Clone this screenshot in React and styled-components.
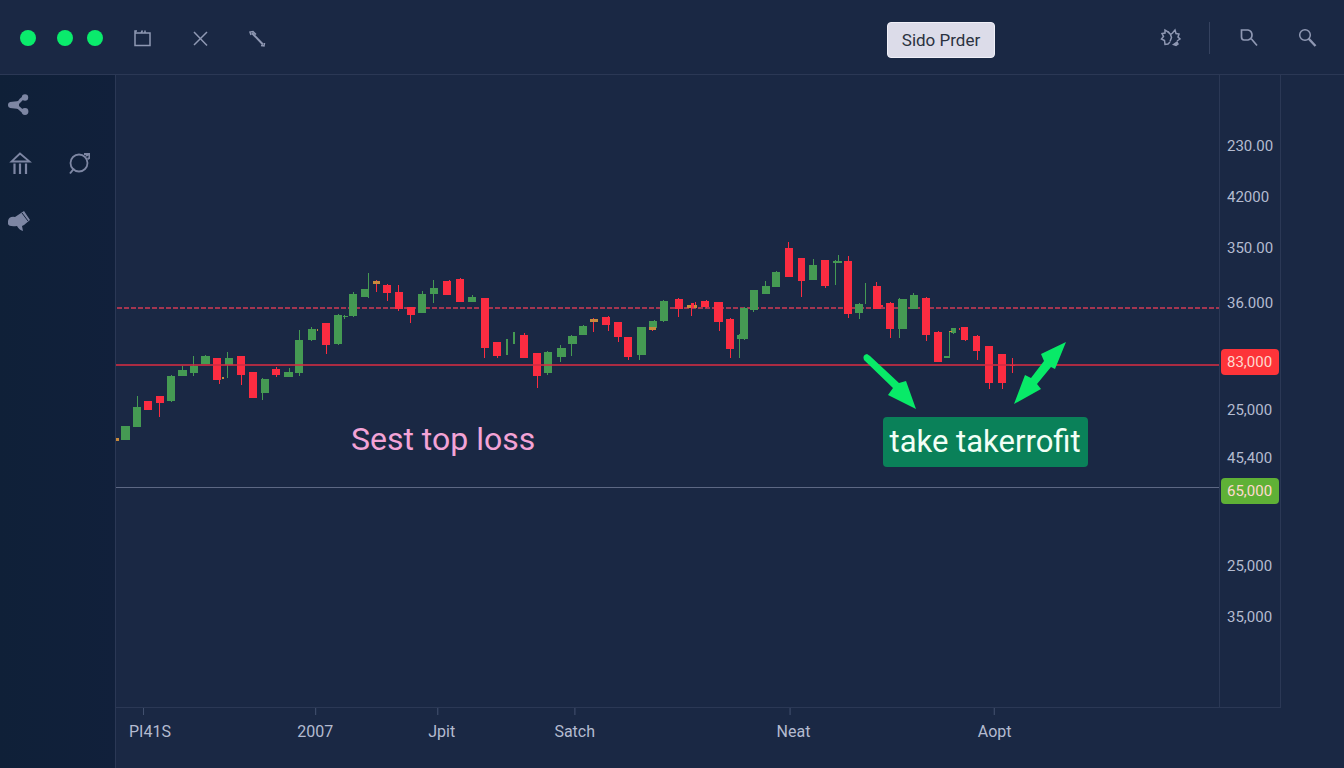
import React, {useState} from "react";
import styled, {createGlobalStyle} from "styled-components";

const UP = "#459a53";
const DOWN = "#fb2c41";
const MIXED = "#c98a3c";

// [color, left, top, bottom, wick top, wick bottom, wick x, width]
const candles = [
    ["mixed", 116, 438, 441, 438, 441, 117, 3],
    ["up", 121, 426, 440, 426, 440, 126, 9],
    ["up", 133, 407, 427, 396, 427, 137],
    ["down", 144, 401, 410, 401, 410, 148],
    ["down", 156, 396, 403, 396, 417, 159],
    ["up", 167, 376, 401, 375, 402, 171],
    ["up", 178, 370, 376, 366, 376, 182, 9],
    ["up", 190, 366, 373, 356, 376, 193],
    ["up", 201, 356, 364, 355, 364, 205, 9],
    ["down", 213, 358, 380, 358, 384, 219],
    ["mixed", 222, 377, 379, 377, 379, 223, 2],
    ["up", 225, 358, 365, 352, 378, 227],
    ["down", 237, 356, 375, 356, 385, 241],
    ["down", 249, 372, 398, 372, 398, 253],
    ["up", 261, 379, 393, 378, 400, 262],
    ["down", 272, 369, 375, 367, 377, 276],
    ["up", 284, 372, 377, 368, 377, 289, 9],
    ["up", 295, 340, 373, 330, 376, 299],
    ["up", 308, 329, 340, 327, 341, 311],
    ["mixed", 317, 329, 331, 329, 331, 317, 1],
    ["down", 322, 323, 345, 323, 354, 326],
    ["up", 334, 315, 344, 314, 345, 338],
    ["up", 343, 316, 317, 315, 319, 344, 5],
    ["up", 349, 294, 316, 292, 317, 353],
    ["up", 361, 289, 297, 273, 298, 368],
    ["mixed", 373, 281, 284, 280, 292, 376, 7],
    ["down", 383, 285, 293, 284, 301, 387],
    ["down", 395, 292, 309, 285, 311, 398],
    ["down", 407, 307, 315, 307, 323, 410],
    ["up", 418, 294, 313, 291, 313, 422],
    ["up", 430, 288, 294, 280, 303, 433],
    ["down", 443, 281, 295, 280, 295, 449],
    ["down", 456, 279, 302, 278, 302, 460],
    ["up", 468, 297, 302, 295, 302, 472],
    ["down", 481, 298, 348, 298, 358, 484],
    ["down", 493, 342, 356, 342, 358, 497],
    ["up", 506, 339, 355, 339, 355, 507, 2],
    ["up", 513, 332, 344, 332, 344, 513, 2],
    ["down", 520, 335, 358, 333, 358, 524],
    ["down", 533, 353, 376, 353, 388, 537],
    ["up", 544, 352, 373, 351, 375, 547],
    ["up", 557, 348, 357, 345, 362, 560, 9],
    ["up", 568, 336, 344, 335, 356, 571, 9],
    ["up", 579, 326, 335, 325, 335, 583],
    ["mixed", 590, 319, 322, 318, 332, 593],
    ["down", 602, 317, 325, 316, 331, 608],
    ["down", 614, 322, 337, 322, 342, 618],
    ["down", 624, 337, 357, 337, 360, 628],
    ["up", 637, 327, 355, 327, 360, 639, 9],
    ["up", 649, 321, 328, 320, 330, 654],
    ["mixed", 649, 327, 330, 327, 331, 652, 7],
    ["up", 660, 301, 321, 300, 322, 663],
    ["down", 675, 299, 309, 298, 317, 678],
    ["mixed", 687, 305, 308, 302, 308, 695, 10],
    ["down", 691, 303, 308, 303, 316, 691, 3],
    ["down", 701, 301, 307, 300, 308, 706],
    ["down", 714, 302, 322, 302, 331, 719, 9],
    ["down", 726, 319, 349, 318, 358, 730],
    ["up", 737, 335, 339, 334, 358, 739, 3],
    ["up", 740, 308, 339, 307, 340, 744],
    ["up", 750, 290, 310, 290, 312, 753],
    ["up", 762, 286, 294, 281, 294, 765],
    ["up", 772, 272, 287, 271, 287, 776],
    ["down", 785, 248, 277, 242, 277, 788],
    ["down", 798, 258, 281, 258, 297, 801, 7],
    ["up", 809, 265, 280, 259, 280, 813],
    ["down", 821, 260, 286, 260, 288, 825],
    ["up", 833, 261, 263, 260, 285, 835, 9],
    ["up", 838, 256, 262, 255, 262, 838, 1],
    ["down", 844, 261, 314, 256, 318, 848],
    ["up", 855, 304, 313, 303, 319, 859],
    ["up", 865, 283, 304, 283, 304, 865, 1],
    ["down", 873, 286, 309, 282, 309, 876],
    ["down", 881, 305, 307, 305, 307, 881, 2],
    ["down", 886, 303, 329, 302, 338, 890],
    ["up", 898, 299, 329, 298, 338, 899, 9],
    ["up", 910, 295, 309, 293, 309, 913],
    ["down", 922, 298, 335, 297, 341, 926],
    ["down", 934, 332, 362, 331, 362, 938],
    ["up", 944, 356, 358, 331, 358, 949, 5],
    ["up", 951, 328, 333, 328, 334, 953, 5],
    ["mixed", 949, 331, 332, 331, 332, 949, 3],
    ["down", 959, 328, 330, 328, 330, 959, 1],
    ["down", 961, 327, 340, 327, 341, 965, 7],
    ["down", 973, 336, 351, 335, 360, 977, 7],
    ["down", 985, 346, 383, 346, 389, 989],
    ["down", 998, 354, 383, 354, 389, 1002],
    ["down", 1010, 365, 366, 358, 373, 1012, 5],
];

const fills = {up: UP, down: DOWN, mixed: MIXED};

// weight is the share of the axis height that ends at the label
const prices = [
    {text: "230.00", weight: 84},
    {text: "42000", weight: 51},
    {text: "350.00", weight: 51},
    {text: "36.000", weight: 55},
    {text: "83,000", weight: 59, tag: "#fd3439"},
    {text: "25,000", weight: 48},
    {text: "45,400", weight: 48},
    {text: "65,000", weight: 33, tag: "#5fb136"},
    {text: "25,000", weight: 75},
    {text: "35,000", weight: 51},
];

const times = [
    {text: "PI41S", weight: 168},
    {text: "2007", weight: 131},
    {text: "Jpit", weight: 126},
    {text: "Satch", weight: 222},
    {text: "Neat", weight: 201},
    {text: "Aopt", weight: 243},
];

const ticks = [143, 315, 437, 574, 789, 993];

const Icon = ({children}) => (
    <svg width="24" height="24" viewBox="0 0 24 24" fill="none" stroke="currentColor" strokeWidth="1.5" aria-hidden="true">
        {children}
    </svg>
);

const Toolbar = () => (
    <Header>
        <Group $gap={21}>
            <Dot />
            <Group $gap={14}>
                <Dot />
                <Dot />
            </Group>
        </Group>
        <Tools>
            <IconButton aria-label="Calendar">
                <Icon>
                    <path d="M4 7v12.500h15V7zM4 7V5h2M10 7l1.500-2.500M14 7V4.500" />
                </Icon>
            </IconButton>
            <IconButton aria-label="Close">
                <Icon>
                    <path d="M6 6l13 13.500M19 6L6 19" />
                </Icon>
            </IconButton>
            <IconButton aria-label="Draw line">
                <Icon>
                    <path d="M6 9l-1-3 3-0.500 3 3" />
                    <path d="M7 7l11 11.500" strokeWidth="2" />
                    <path d="M16 19.500l3 0.500 0.500-3" />
                </Icon>
            </IconButton>
        </Tools>
        <OrderButton>Sido Prder</OrderButton>
        <Actions>
            <IconButton aria-label="Settings">
                <Icon>
                    <path d="M11 7L9.500 5.500 7 4v3L4 7.500l1.500 3L3.500 13l3 1.500L7 18.500l3-0.500 2-2" />
                    <path d="M10 5.500l2.500 3 2-1.500L17 4l1 3.500 3 0.500-1 3 2 2-3 2" />
                    <path d="M12.500 8.500l1 3-1.500 4" />
                    <path d="M15.500 18.500l3.500-2.500 1 2-2 1.500z" fill="currentColor" />
                </Icon>
            </IconButton>
            <Divider />
            <Group $gap={34}>
                <IconButton aria-label="Zoom">
                    <Icon>
                        <path d="M4.500 4h6.500q4 1 4 5t-4 5H7q-2.500 0-2.500-3zM14.500 13l5.500 6.500" strokeWidth="1.700" />
                    </Icon>
                </IconButton>
                <IconButton aria-label="Search">
                    <Icon>
                        <circle cx="10" cy="9" r="5.300" />
                        <path d="M13.500 12.500l7 7.500" strokeWidth="2.400" />
                    </Icon>
                </IconButton>
            </Group>
        </Actions>
    </Header>
);

const Sidebar = () => (
    <Side>
        <IconButton aria-label="Share">
            <Icon>
                <path d="M3 12q6 0 8.500-3.500T17 4.500M3 12.500q6 0 8 2.500t6 4" strokeWidth="3" />
                <path d="M2 9l9-1v8l-9-1z" fill="currentColor" stroke="none" />
                <g fill="currentColor" stroke="none">
                    <circle cx="3" cy="12" r="3" />
                    <circle cx="17" cy="4.500" r="3.200" />
                    <circle cx="17" cy="18.500" r="3.400" />
                </g>
            </Icon>
        </IconButton>
        <span />
        <IconButton aria-label="Markets">
            <Icon>
                <path d="M12 2.500L3.500 10.500h18z" strokeWidth="1.800" />
                <path d="M6.500 12.500v10.500M12 12.500v10.500M18 12.500v10.500" strokeWidth="2.200" />
            </Icon>
        </IconButton>
        <IconButton aria-label="Orbit">
            <Icon>
                <circle cx="13" cy="12" r="8.500" strokeWidth="1.800" />
                <path d="M18 3h5.500v4l-2 1M20 5l3-2M8 17.500l-4 5" strokeWidth="2" />
            </Icon>
        </IconButton>
        <IconButton aria-label="Announcements">
            <Icon>
                <path d="M0 12q1-5 7-4l9-6 6 9-6 5-2 1 1 5q-4-1-6-5-8 1-9-2z" fill="currentColor" stroke="none" />
                <path d="M14 4l6 8" stroke="#10203a" strokeWidth="1" />
            </Icon>
        </IconButton>
    </Side>
);

const Chart = () => (
    <Plot>
        <svg viewBox="116 75 1103 632" preserveAspectRatio="none" role="img" aria-label="Candlestick chart">
            <g shapeRendering="crispEdges">
                <line x1="116" x2="1219" y1="487" y2="487" stroke="#5d6884" strokeWidth="1" />
                <line x1="117" x2="1219" y1="308" y2="308" stroke="#e03a55" strokeOpacity="0.700" strokeWidth="2" strokeDasharray="5 2" />
                {candles.map(([kind, x, top, bottom, high, low, wick, width = 8], i) => (
                    <g key={i} fill={fills[kind]}>
                        <rect x={wick} y={high} width="1" height={low - high} fill={kind === "mixed" ? DOWN : fills[kind]} />
                        <rect x={x} y={top} width={width} height={bottom - top} />
                    </g>
                ))}
                <rect x="116" y="364" width="1103" height="2" fill="#d02c42" fillOpacity="0.800" />
            </g>
            <g fill="#08ea68">
                <path d="M864 360q-2-5 3-6l3 2 29 27 7-2 10 28-28-14 5-7z" />
                <path d="M1066 342l-11 27-4-2-14 17 4 5-27 15 11-29 6 3 13-17-3-7z" />
            </g>
        </svg>
        <StopLoss>Sest top loss</StopLoss>
        <TakeProfit>take takerrofit</TakeProfit>
    </Plot>
);

const App = () => {

    const [selected, setSelected] = useState(null);

    return (
        <Page>
            <GlobalStyle />
            <Toolbar />
            <Body>
                <Sidebar />
                <Main>
                    <Row>
                        <Chart />
                        <PriceAxis>
                            {prices.map((price, i) => (
                                <PriceSlot key={i} $weight={price.weight}>
                                    <Price $tag={price.tag}>{price.text}</Price>
                                </PriceSlot>
                            ))}
                            <PriceSlot $weight={77} />
                        </PriceAxis>
                    </Row>
                    <TimeAxis>
                        <Ruler viewBox="116 0 1164 7" preserveAspectRatio="none" aria-hidden="true">
                            {ticks.map(x => (
                                <rect key={x} x={x} y="0" width="1" height="7" fill="#445270" />
                            ))}
                        </Ruler>
                        <Times>
                            {times.map(time => (
                                <Time
                                    key={time.text}
                                    $weight={time.weight}
                                    $active={selected === time.text}
                                    onMouseEnter={() => setSelected(time.text)}
                                    onMouseLeave={() => setSelected(null)}
                                >
                                    {time.text}
                                </Time>
                            ))}
                        </Times>
                    </TimeAxis>
                </Main>
            </Body>
        </Page>
    )
}

export default App;

const GlobalStyle = createGlobalStyle`
    * {
        box-sizing: border-box;
    }

    body {
        margin: 0;
        background: #1a2844;
        color: #b4bbd0;
        font-family: Roboto, "Liberation Sans", sans-serif;
        font-size: 16px;
    }
`

const Page = styled.div`
    display: flex;
    flex-direction: column;
    min-height: 100vh;
`

const Header = styled.header`
    display: flex;
    align-items: flex-start;
    padding: 22px 25px 20px 20px;
    height: 75px;
    border-bottom: 1px solid #2b3855;
`

const Group = styled.div`
    display: flex;
    align-items: center;
    gap: ${props => props.$gap}px;
    height: 32px;
`

const Tools = styled(Group).attrs({$gap: 33})`
    margin-left: 28px;
`

const Actions = styled(Group).attrs({$gap: 27})`
    margin-left: 163px;
`

const Dot = styled.span`
    width: 16px;
    height: 16px;
    border-radius: 50%;
    background: #0aeb6c;
`

const IconButton = styled.button`
    display: flex;
    width: 24px;
    height: 24px;
    padding: 0;
    border: 0;
    background: none;
    color: #8f98b3;
    cursor: pointer;

    &:hover {
        color: #fff;
    }
`

const OrderButton = styled.button`
    width: 108px;
    height: 36px;
    margin-left: auto;
    padding: 0;
    border: 1px solid #f0f0f8;
    border-radius: 4px;
    background: #dcdce9;
    color: #2b3240;
    font-family: inherit;
    font-size: 17px;
    cursor: pointer;
`

const Divider = styled.span`
    width: 1px;
    height: 32px;
    background: #35425f;
`

const Body = styled.div`
    display: flex;
    flex: 1;
`

const Side = styled.nav`
    display: grid;
    grid-template-columns: 58px 24px;
    grid-auto-rows: 58px;
    align-content: start;
    align-items: center;
    width: 116px;
    padding: 1px 8px;
    border-right: 1px solid #2b3855;
    background: linear-gradient(90deg, #0f2038, #11203b);

    button {
        color: #7d86a3;
    }
`

const Main = styled.main`
    display: flex;
    flex: 1;
    flex-direction: column;
    margin-right: 63px;
`

const Row = styled.div`
    display: flex;
    flex: 1;
`

const Plot = styled.section`
    position: relative;
    flex: 1;

    svg {
        display: block;
        width: 100%;
        height: 100%;
    }
`

const Note = styled.div`
    position: absolute;
    white-space: nowrap;
`

const StopLoss = styled(Note)`
    top: 54.5%;
    left: 21.3%;
    color: #f3a3d6;
    font-size: 32px;
    line-height: 40px;
`

const TakeProfit = styled(Note)`
    top: 54.1%;
    left: 69.5%;
    padding: 0 7px;
    border-radius: 4px;
    background: #0a8159;
    color: #f2fff6;
    font-size: 31px;
    line-height: 50px;
`

const PriceAxis = styled.div`
    display: flex;
    flex-direction: column;
    width: 62px;
    border: 1px solid #2b3855;
    border-width: 0 1px;
`

const PriceSlot = styled.div`
    display: flex;
    flex: ${props => props.$weight} 0 0;
    align-items: flex-end;
    min-height: 26px;
    padding: 0 1px;
`

const Price = styled.div`
    width: 100%;
    border-radius: 4px;
    background: ${props => props.$tag || "none"};
    color: ${props => props.$tag ? "#ffd9cf" : "inherit"};
    padding-left: 6px;
    font-size: 15px;
    line-height: 26px;
`

const TimeAxis = styled.div`
    height: 61px;
    border-top: 1px solid #2b3855;
`

const Ruler = styled.svg`
    display: block;
    width: 100%;
    height: 7px;
`

const Times = styled.div`
    display: flex;
    padding: 7px 60px 0 13px;
`

const Time = styled.span`
    flex: ${props => props.$weight} 0 0;
    color: ${props => props.$active ? "#fff" : "inherit"};
    line-height: 20px;
`
